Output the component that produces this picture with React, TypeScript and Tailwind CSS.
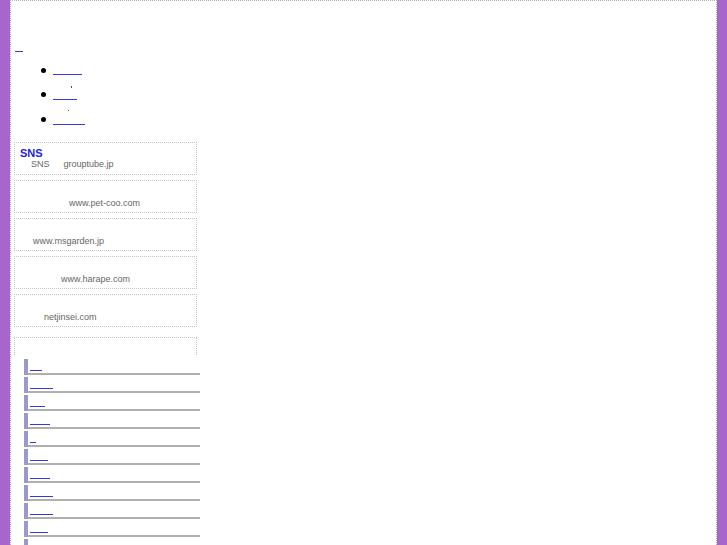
const sites = [
  { pad: 'pl-[54px]', text: 'www.pet-coo.com' },
  { pad: 'pl-[18px]', text: 'www.msgarden.jp' },
  { pad: 'pl-[46px]', text: 'www.harape.com' },
  { pad: 'pl-[29px]', text: 'netjinsei.com' },
];

const menuWidths = ['w-[12px]', 'w-[23px]', 'w-[15px]', 'w-[20px]', 'w-[6px]', 'w-[18px]', 'w-[20px]', 'w-[23px]', 'w-[23px]', 'w-[18px]', 'w-[20px]'];

function Blank({ w, h = 'h-[11px]' }: { w: string; h?: string }) {
  return <a href="#" className={`block shrink-0 border-b border-[#3838d8] ${h} ${w}`} />;
}

export default function App() {
  return (
    <div className="flex min-h-screen bg-[#a865cc] font-['Liberation_Sans',Arial,sans-serif]">
      <div className="w-[10px] shrink-0" />
      <div className="flex-1 overflow-hidden border-x border-t border-dotted border-[#b4b4b4] bg-white">
        <div className="h-[41px]" />
        <div className="flex pl-[4px]">
          <Blank w="w-[8px]" h="h-[10px]" />
        </div>

        <ul className="mt-[12px] flex flex-col">
          <li className="flex h-[25px] items-start pl-[30px]">
            <span className="mt-[4px] h-[5px] w-[5px] rounded-full bg-black" />
            <div className="ml-[7px] flex flex-col items-start">
              <Blank w="w-[29px]" />
              <span className="ml-[18px] mt-[11px] h-[2px] w-px bg-[#555]" />
            </div>
          </li>
          <li className="flex h-[25px] items-start pl-[30px]">
            <span className="mt-[3px] h-[5px] w-[5px] rounded-full bg-black" />
            <div className="ml-[7px] flex flex-col items-start">
              <Blank w="w-[24px]" />
              <span className="ml-[15px] mt-[10px] h-px w-px bg-[#555]" />
            </div>
          </li>
          <li className="flex h-[25px] items-start pl-[30px]">
            <span className="mt-[3px] h-[5px] w-[5px] rounded-full bg-black" />
            <div className="ml-[7px] flex">
              <Blank w="w-[32px]" />
            </div>
          </li>
        </ul>

        <div className="mt-[3px] flex w-[186px] flex-col gap-[5px] pl-[3px] text-[9px] leading-[11px] text-[#666]">
          <div className="h-[33px] w-[183px] border border-dotted border-[#c4c4c4] pl-[5px] pt-[4px]">
            <a href="#" className="block text-[11px] font-bold leading-[12px] text-[#2222dd]">SNS</a>
            <div className="flex pl-[11px]">
              <span>SNS</span>
              <span className="ml-[14px]">grouptube.jp</span>
            </div>
          </div>
          {sites.map((s) => (
            <div key={s.text} className={`h-[33px] w-[183px] border border-dotted border-[#c4c4c4] pt-[17px] ${s.pad}`}>
              {s.text}
            </div>
          ))}
        </div>

        <div className="ml-[3px] mt-[10px] h-[18px] w-[183px] border-x border-t border-dotted border-[#c4c4c4]" />

        <div className="ml-[13px] mt-[4px] flex w-[176px] flex-col gap-[2px]">
          {menuWidths.map((w, i) => (
            <div key={i} className="flex h-[16px]">
              <span className="w-[4px] bg-[#9999cc]" />
              <div className="flex flex-1 items-start border-b-2 border-[#b0b0b0] pl-[2px]">
                <Blank w={w} h="h-[12px]" />
              </div>
            </div>
          ))}
        </div>
      </div>
      <div className="w-[10px] shrink-0" />
    </div>
  );
}
